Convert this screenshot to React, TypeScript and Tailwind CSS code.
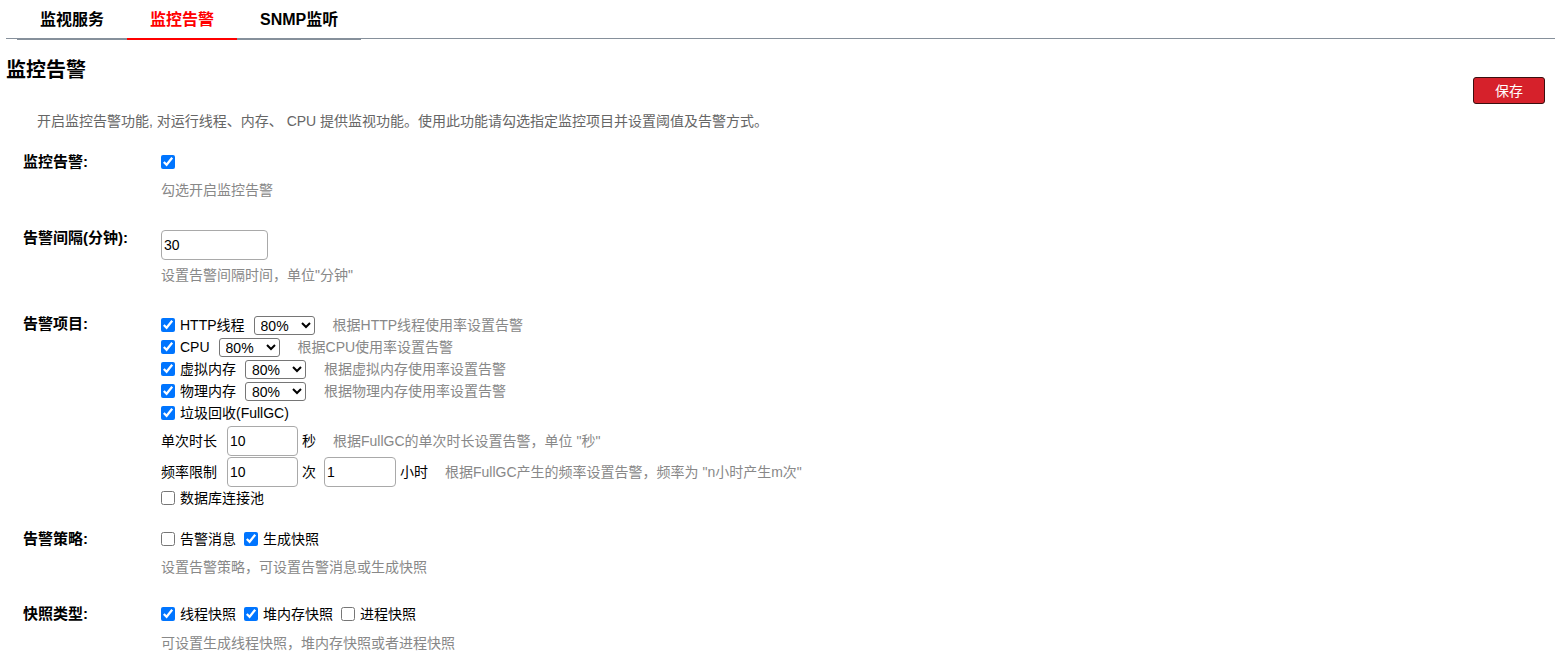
import React from "react";

const font = "font-['Liberation_Sans','Noto_Sans_CJK_SC',sans-serif]";

function Check({ checked, label }: { checked?: boolean; label: string }) {
  return (
    <label className="flex items-center">
      <input type="checkbox" defaultChecked={checked} className="w-[14px] h-[14px] m-0" />
      <span className="ml-[5px] text-black">{label}</span>
    </label>
  );
}

function Threshold({ label, hint }: { label: string; hint: string }) {
  return (
    <div className="flex items-center h-[22px]">
      <Check checked label={label} />
      <select
        defaultValue="80"
        className="ml-[9px] w-[61px] h-[19px] border border-[#767676] rounded-[3px] text-[14px] leading-none pl-[2px] text-black"
      >
        <option value="70">70%</option>
        <option value="80">80%</option>
        <option value="90">90%</option>
      </select>
      <span className="ml-[18px] text-[#888]">{hint}</span>
    </div>
  );
}

function Row({
  label,
  className,
  children,
}: {
  label: string;
  className?: string;
  children: React.ReactNode;
}) {
  return (
    <div className={"flex items-start " + (className ?? "")}>
      <div className="w-[138px] shrink-0 text-[15px] font-bold leading-[20px] text-black">
        {label}
      </div>
      <div className="flex-1 text-[14px] leading-[20px]">{children}</div>
    </div>
  );
}

export default function App() {
  return (
    <div className={`min-h-screen bg-white pl-[6px] pr-[10px] ${font}`}>
      <div className="flex border-b border-[#86909b] pl-[11px]">
        {[
          { name: "监视服务", active: false },
          { name: "监控告警", active: true },
          { name: "SNMP监听", active: false },
        ].map((t) => (
          <div
            key={t.name}
            className={
              "h-[40px] -mb-[2px] px-[23px] border-b-2 flex items-start pt-[9px] text-[16px] font-bold leading-[22px] " +
              (t.active ? "border-[#ff0000] text-[#ff0000]" : "border-[#86909b] text-black")
            }
          >
            {t.name}
          </div>
        ))}
      </div>

      <div className="flex justify-between items-start mt-[17px]">
        <h1 className="text-[20px] font-bold leading-[28px] text-black">监控告警</h1>
        <button className="mt-[21px] mr-[10px] w-[72px] h-[27px] bg-[#d6212b] border border-[#3a1010] rounded-[3px] text-white text-[14px] leading-none">
          保存
        </button>
      </div>

      <p className="mt-[7px] pl-[31px] text-[14px] leading-[20px] text-[#666]">
        开启监控告警功能, 对运行线程、内存、 CPU 提供监视功能。使用此功能请勾选指定监控项目并设置阈值及告警方式。
      </p>

      <div className="pl-[17px]">
        <Row label="监控告警:" className="mt-[21px]">
          <div className="h-[20px] flex items-center">
            <input type="checkbox" defaultChecked className="w-[14px] h-[14px] m-0" />
          </div>
          <div className="mt-[8px] text-[#888]">勾选开启监控告警</div>
        </Row>

        <Row label="告警间隔(分钟):" className="mt-[28px]">
          <input
            defaultValue="30"
            className="mt-[2px] w-[107px] h-[30px] border border-[#a9a9a9] rounded-[4px] px-[2px] text-[14px] text-black"
          />
          <div className="mt-[5px] text-[#888]">设置告警间隔时间，单位"分钟"</div>
        </Row>

        <Row label="告警项目:" className="mt-[29px]">
          <Threshold label="HTTP线程" hint="根据HTTP线程使用率设置告警" />
          <Threshold label="CPU" hint="根据CPU使用率设置告警" />
          <Threshold label="虚拟内存" hint="根据虚拟内存使用率设置告警" />
          <Threshold label="物理内存" hint="根据物理内存使用率设置告警" />
          <div className="h-[22px] flex items-center">
            <Check checked label="垃圾回收(FullGC)" />
          </div>
          <div className="mt-[2px] flex items-center h-[30px] text-black">
            <span>单次时长</span>
            <input
              defaultValue="10"
              className="ml-[10px] w-[71px] h-[30px] border border-[#a9a9a9] rounded-[4px] px-[2px] text-[14px]"
            />
            <span className="ml-[4px]">秒</span>
            <span className="ml-[17px] text-[#888]">根据FullGC的单次时长设置告警，单位 "秒"</span>
          </div>
          <div className="mt-[1px] flex items-center h-[30px] text-black">
            <span>频率限制</span>
            <input
              defaultValue="10"
              className="ml-[10px] w-[71px] h-[30px] border border-[#a9a9a9] rounded-[4px] px-[2px] text-[14px]"
            />
            <span className="ml-[4px]">次</span>
            <input
              defaultValue="1"
              className="ml-[8px] w-[72px] h-[30px] border border-[#a9a9a9] rounded-[4px] px-[2px] text-[14px]"
            />
            <span className="ml-[4px]">小时</span>
            <span className="ml-[17px] text-[#888]">根据FullGC产生的频率设置告警，频率为 "n小时产生m次"</span>
          </div>
          <div className="h-[21px] flex items-center">
            <Check label="数据库连接池" />
          </div>
        </Row>

        <Row label="告警策略:" className="mt-[21px]">
          <div className="h-[20px] flex items-center gap-[8px]">
            <Check label="告警消息" />
            <Check checked label="生成快照" />
          </div>
          <div className="mt-[8px] text-[#888]">设置告警策略，可设置告警消息或生成快照</div>
        </Row>

        <Row label="快照类型:" className="mt-[27px]">
          <div className="h-[20px] flex items-center gap-[8px]">
            <Check checked label="线程快照" />
            <Check checked label="堆内存快照" />
            <Check label="进程快照" />
          </div>
          <div className="mt-[9px] text-[#888]">可设置生成线程快照，堆内存快照或者进程快照</div>
        </Row>
      </div>
    </div>
  );
}
